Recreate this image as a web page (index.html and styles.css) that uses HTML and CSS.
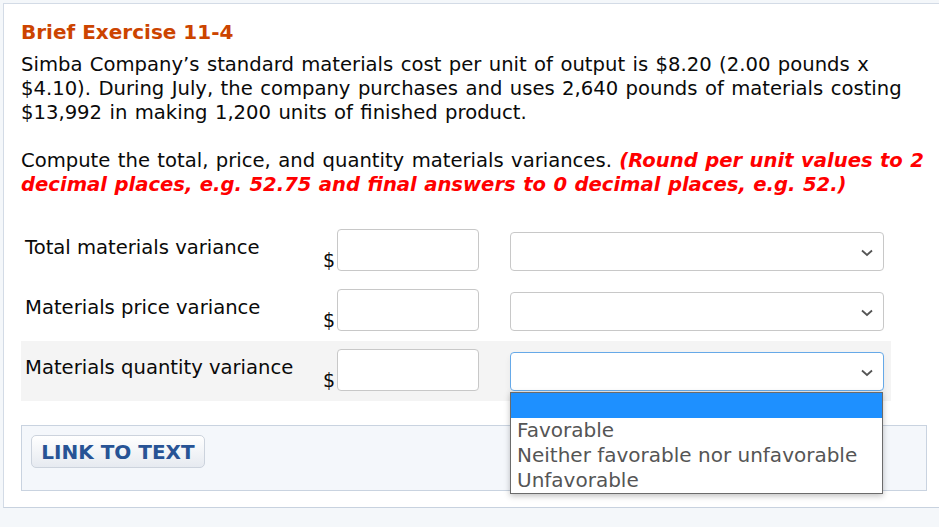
FILE: index.html
```html
<!DOCTYPE html>
<html>
<head>
<meta charset="utf-8">
<link rel="stylesheet" href="styles.css">
</head>
<body>
<div class="card">
  <h1 class="title">Brief Exercise 11-4</h1>
  <p class="text">Simba Company’s standard materials cost per unit of output is $8.20 (2.00 pounds x<br>$4.10). During July, the company purchases and uses 2,640 pounds of materials costing<br>$13,992 in making 1,200 units of finished product.</p>
  <p class="text">Compute the total, price, and quantity materials variances. <em class="warn">(Round per unit values to 2<br>decimal places, e.g. 52.75 and final answers to 0 decimal places, e.g. 52.)</em></p>

  <div class="rows">
    <div class="row">
      <div class="label">Total materials variance</div>
      <div class="dollar">$</div>
      <div class="input"></div>
      <div class="select"><svg class="chev" width="12" height="8" viewBox="0 0 12 8"><path d="M1 1.5 L6 6 L11 1.5" fill="none" stroke="#555" stroke-width="1.8"/></svg></div>
    </div>
    <div class="row">
      <div class="label">Materials price variance</div>
      <div class="dollar">$</div>
      <div class="input"></div>
      <div class="select"><svg class="chev" width="12" height="8" viewBox="0 0 12 8"><path d="M1 1.5 L6 6 L11 1.5" fill="none" stroke="#555" stroke-width="1.8"/></svg></div>
    </div>
    <div class="row row-active">
      <div class="label">Materials quantity variance</div>
      <div class="dollar">$</div>
      <div class="input"></div>
      <div class="select select-focus"><svg class="chev" width="12" height="8" viewBox="0 0 12 8"><path d="M1 1.5 L6 6 L11 1.5" fill="none" stroke="#555" stroke-width="1.8"/></svg>
        <div class="menu">
          <div class="opt opt-sel"></div>
          <div class="opt">Favorable</div>
          <div class="opt">Neither favorable nor unfavorable</div>
          <div class="opt">Unfavorable</div>
        </div>
      </div>
    </div>
  </div>

  <div class="linkbox">
    <button class="linkbtn">LINK TO TEXT</button>
  </div>
</div>
</body>
</html>
```
FILE: styles.css
```css
html, body {
  margin: 0;
  padding: 0;
  background: #f4f7fa;
}
body {
  padding: 3px 0 0 3px;
  font-family: "DejaVu Sans", Verdana, sans-serif;
  color: #0a0a0a;
  overflow: hidden;
}
.card {
  background: #fff;
  border-top: 1px solid #d3dbe6;
  border-left: 1px solid #d3dbe6;
  border-bottom: 1px solid #c8d2df;
  padding: 15px 4px 16px 17px;
}
.title {
  margin: 0 0 8px 0;
  font-size: 20px;
  font-weight: bold;
  color: #cc4400;
  line-height: 26px;
}
.text {
  margin: 0 0 24px 0;
  font-size: 19.6px;
  line-height: 24px;
  word-spacing: 1.2px;
  white-space: nowrap;
}
.warn {
  color: #ff0000;
  font-weight: bold;
  font-style: italic;
  word-spacing: 0.6px;
}
.rows {
  margin-top: 10px;
  width: 870px;
}
.row {
  display: flex;
  height: 60px;
  align-items: flex-start;
}
.row-active {
  background: #f4f4f4;
}
.label {
  width: 298px;
  padding-left: 4px;
  padding-top: 15px;
  font-size: 19.6px;
  line-height: 24px;
}
.dollar {
  width: 14px;
  padding-top: 27px;
  font-size: 19px;
  line-height: 24px;
}
.input {
  margin-top: 8px;
  width: 142px;
  height: 42px;
  box-sizing: border-box;
  border: 1px solid #c8c8c8;
  border-radius: 4px;
  background: #fff;
}
.select {
  position: relative;
  margin-top: 11px;
  margin-left: 31px;
  width: 374px;
  height: 39px;
  box-sizing: border-box;
  border: 1px solid #c8c8c8;
  border-radius: 4px;
  background: #fff;
}
.select-focus {
  border-color: #66a9e8;
  box-shadow: 0 4px 6px rgba(0,0,0,0.06);
}
.chev {
  position: absolute;
  right: 10px;
  top: 16px;
}
.menu {
  position: absolute;
  left: -1px;
  top: 39px;
  width: 373px;
  box-sizing: border-box;
  border: 1px solid #6b6b6b;
  background: #fff;
  box-shadow: 0 2px 6px rgba(0,0,0,0.25);
  z-index: 5;
}
.opt {
  height: 25px;
  line-height: 25px;
  font-size: 20px;
  color: #555;
  padding-left: 6px;
  white-space: nowrap;
}
.opt-sel {
  background: #1e90ff;
}
.linkbox {
  margin-top: 24px;
  width: 906px;
  height: 66px;
  box-sizing: border-box;
  border: 1px solid #c9d3e0;
  background: #f4f7fb;
  padding: 9px 0 0 9px;
}
.linkbtn {
  display: block;
  height: 33px;
  width: 174px;
  border: 1px solid #ccd3dd;
  border-radius: 5px;
  background: linear-gradient(#ffffff, #e6eaf0);
  color: #275395;
  font-family: "DejaVu Sans", Verdana, sans-serif;
  font-weight: bold;
  font-size: 20px;
  padding: 0;
  cursor: pointer;
}
```
